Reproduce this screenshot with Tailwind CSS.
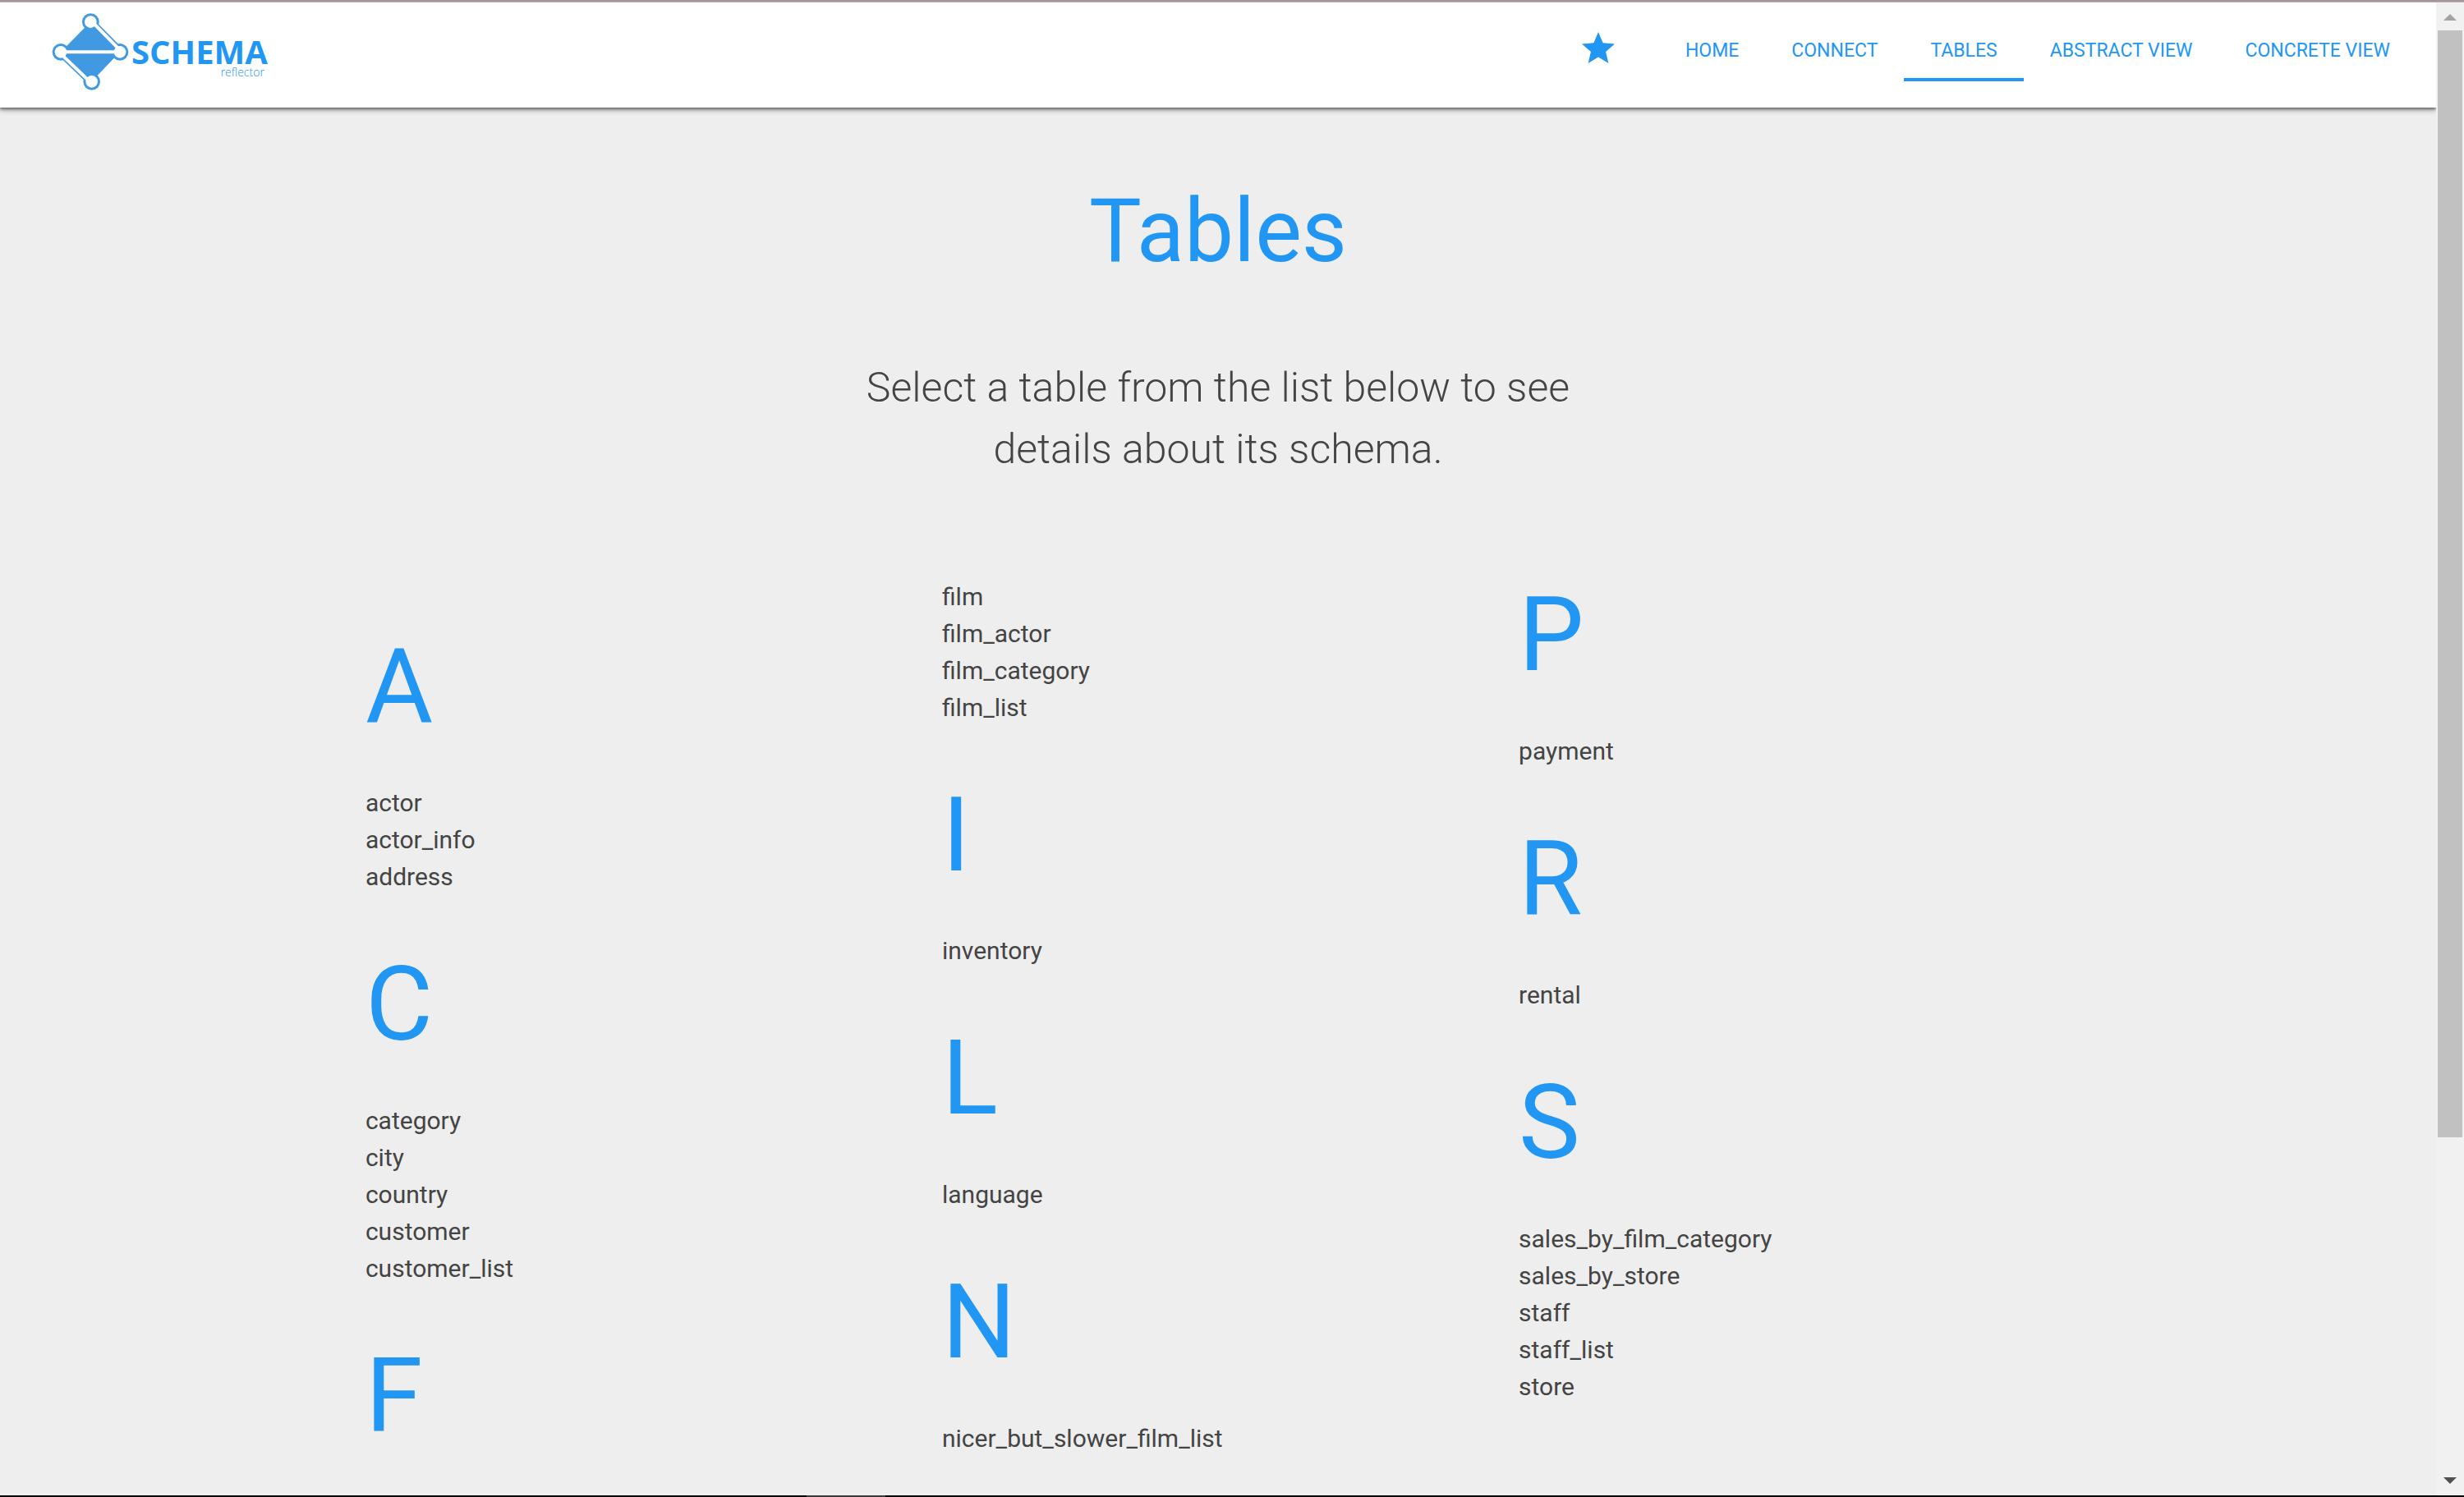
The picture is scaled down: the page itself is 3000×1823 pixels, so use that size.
<!DOCTYPE html>
<html lang="en">
<head>
<meta charset="utf-8">
<title>Schema Reflector - Tables</title>
<script src="https://cdn.jsdelivr.net/npm/@tailwindcss/browser@4"></script>
</head>
<body class="flex h-screen flex-col overflow-hidden bg-[#eee] font-['Roboto',sans-serif] text-[30px] leading-[45px] text-[#444]">
<div class="h-[3px] shrink-0 border-b border-[#b5b1b8] bg-[#a89594]"></div>
<div class="flex min-h-0 flex-1">
  <div class="flex min-w-0 flex-1 flex-col overflow-hidden">
    <header class="relative flex h-32 shrink-0 items-start justify-between bg-white pr-6 pl-[60px] shadow-[0_4px_5px_0_rgba(0,0,0,0.14),0_1px_8px_0_rgba(0,0,0,0.25),0_2px_3px_0_rgba(0,0,0,0.4)]">
      <a href="#" class="flex pt-[11px] text-[#2196f3]" aria-label="Schema reflector">
        <svg class="h-[100px] w-[100px]" viewBox="180 42 300 300" fill="none">
          <path d="M330 80 L438 190 L335 298 L222 190Z" fill="#419ae1"/>
          <path d="M337 73 L445 183" stroke="#419ae1" stroke-width="12"/>
          <path d="M215 197 L328 305" stroke="#419ae1" stroke-width="12"/>
          <g fill="#419ae1">
            <circle cx="331" cy="80" r="31"/><circle cx="222" cy="190" r="31"/>
            <circle cx="438" cy="190" r="31"/><circle cx="335" cy="298" r="31"/>
          </g>
          <g fill="#fff">
            <circle cx="331" cy="80" r="22"/><circle cx="222" cy="190" r="22"/>
            <circle cx="438" cy="190" r="22"/><circle cx="335" cy="298" r="22"/>
          </g>
          <path d="M334 77 L442 187" stroke="#fff" stroke-width="12"/>
          <path d="M219 194 L332 302" stroke="#fff" stroke-width="12"/>
          <path d="M222 190 H438" stroke="#fff" stroke-width="12"/>
        </svg>
        <span class="flex flex-col items-end pt-[31px] font-['Open_Sans',sans-serif]">
          <span class="text-[40px] leading-9 font-bold">SCHEMA</span>
          <span class="pr-1 text-[14px] leading-[14px] font-light">reflector</span>
        </span>
      </a>
      <nav class="flex items-start pt-8 text-[23px] leading-[54px] text-[#2196f3]">
        <a href="#" class="mr-[50px] flex" aria-label="Star">
          <svg class="size-12" viewBox="0 0 24 24" fill="currentColor"><path d="M12 17.27L18.18 21l-1.64-7.03L22 9.24l-7.19-.61L12 2 9.19 8.63 2 9.24l5.46 4.73L5.82 21z"/></svg>
        </a>
        <a href="#" class="border-b-4 border-transparent px-8 pb-1.5">HOME</a>
        <a href="#" class="border-b-4 border-transparent px-8 pb-1.5">CONNECT</a>
        <a href="#" class="border-b-4 border-[#2196f3] px-8 pb-1.5">TABLES</a>
        <a href="#" class="border-b-4 border-transparent px-8 pb-1.5">ABSTRACT VIEW</a>
        <a href="#" class="border-b-4 border-transparent px-8 pb-1.5">CONCRETE VIEW</a>
      </nav>
    </header>
    <main class="mx-auto w-[70%] pt-[92px]">
      <h1 class="text-center text-[107px] leading-[118px] text-[#2196f3]">Tables</h1>
      <p class="mx-auto mt-[94px] max-w-[940px] text-center text-[50px] leading-[75px] font-light">Select a table from the list below to see details about its schema.</p>
      <div class="mt-[119px] grid grid-cols-3 gap-[30px]">
        <div>
          <h2 class="mt-16 mb-12 text-[126px] leading-[139px] text-[#2196f3]">A</h2>
          <ul><li><a href="#">actor</a></li><li><a href="#">actor_info</a></li><li><a href="#">address</a></li></ul>
          <h2 class="mt-16 mb-[49px] text-[126px] leading-[139px] text-[#2196f3]">C</h2>
          <ul><li><a href="#">category</a></li><li><a href="#">city</a></li><li><a href="#">country</a></li><li><a href="#">customer</a></li><li><a href="#">customer_list</a></li></ul>
          <h2 class="mt-16 text-[126px] leading-[139px] text-[#2196f3]">F</h2>
        </div>
        <div>
          <ul><li><a href="#">film</a></li><li><a href="#">film_actor</a></li><li><a href="#">film_category</a></li><li><a href="#">film_list</a></li></ul>
          <h2 class="mt-16 mb-12 text-[126px] leading-[139px] text-[#2196f3]">I</h2>
          <ul><li><a href="#">inventory</a></li></ul>
          <h2 class="mt-16 mb-[49px] text-[126px] leading-[139px] text-[#2196f3]">L</h2>
          <ul><li><a href="#">language</a></li></ul>
          <h2 class="mt-16 mb-[49px] text-[126px] leading-[139px] text-[#2196f3]">N</h2>
          <ul><li><a href="#">nicer_but_slower_film_list</a></li></ul>
        </div>
        <div>
          <h2 class="mb-[49px] text-[126px] leading-[139px] text-[#2196f3]">P</h2>
          <ul><li><a href="#">payment</a></li></ul>
          <h2 class="mt-16 mb-[49px] text-[126px] leading-[139px] text-[#2196f3]">R</h2>
          <ul><li><a href="#">rental</a></li></ul>
          <h2 class="mt-16 mb-[49px] text-[126px] leading-[139px] text-[#2196f3]">S</h2>
          <ul><li><a href="#">sales_by_film_category</a></li><li><a href="#">sales_by_store</a></li><li><a href="#">staff</a></li><li><a href="#">staff_list</a></li><li><a href="#">store</a></li></ul>
        </div>
      </div>
    </main>
  </div>
  <!-- scrollbar -->
  <div class="flex w-[34px] shrink-0 flex-col items-center bg-[#f1f1f1]" aria-hidden="true">
    <svg class="h-[34px] w-[34px] shrink-0" viewBox="0 0 34 34"><path d="M9 22 L17 14 L25 22Z" fill="#a3a3a3"/></svg>
    <div class="flex min-h-0 w-[30px] flex-1"><div class="h-[77%] w-full bg-[#c1c1c1]"></div></div>
    <svg class="h-[34px] w-[34px] shrink-0" viewBox="0 0 34 34"><path d="M9 12 H25 L17 20Z" fill="#505050"/></svg>
  </div>
</div>
<div class="flex h-[2px] shrink-0 bg-black pl-[982px]"><div class="w-24 bg-[#3a3a3a]"></div></div>
</body>
</html>
